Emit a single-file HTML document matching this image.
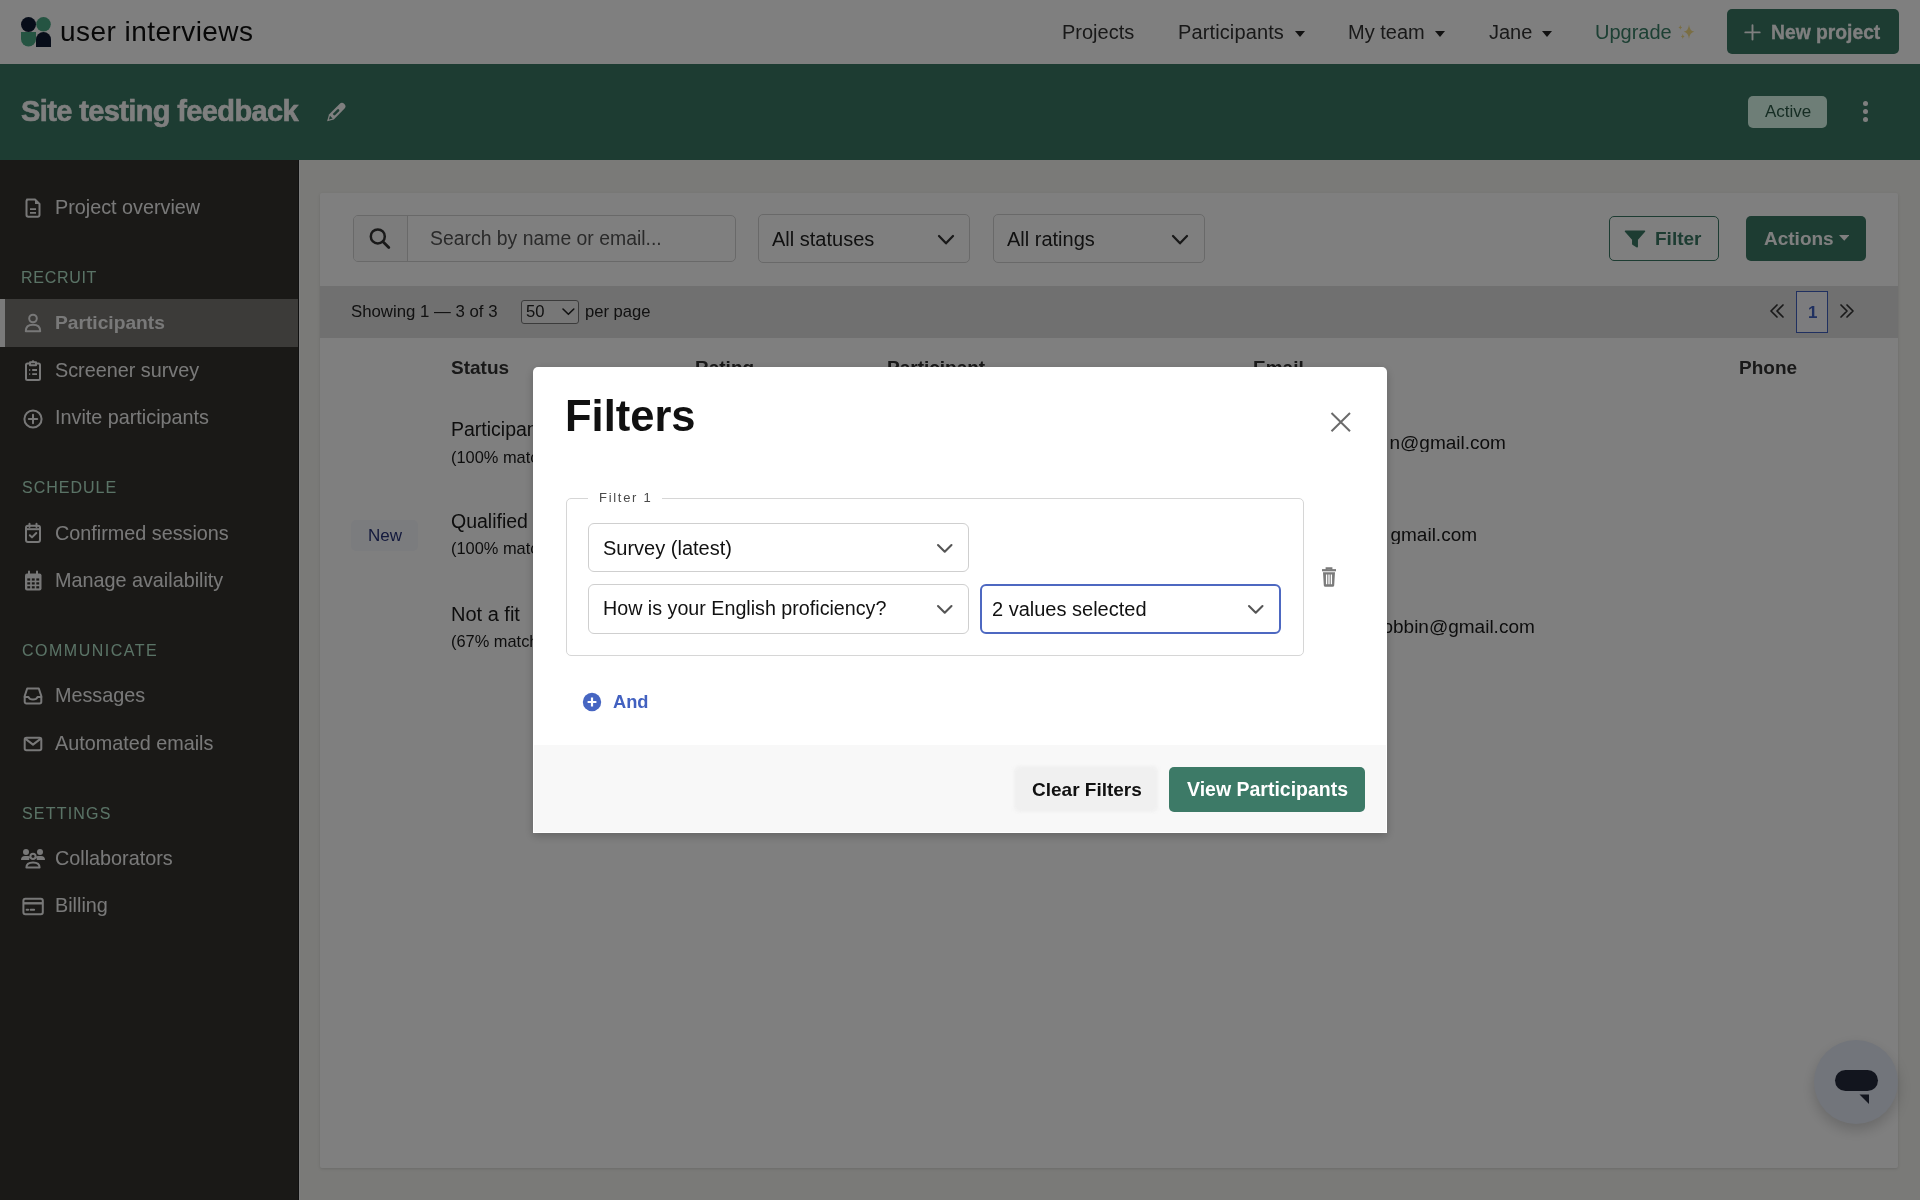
<!DOCTYPE html>
<html><head><meta charset="utf-8"><title>Filters</title>
<style>
html,body{margin:0;padding:0;width:1920px;height:1200px;overflow:hidden;background:#f4f4f0;font-family:"Liberation Sans", sans-serif;}
.t{position:absolute;white-space:nowrap;font-family:"Liberation Sans", sans-serif;will-change:transform;}
svg{display:block}
</style></head><body>
<div style="position:absolute;left:0px;top:0px;width:1920px;height:64px;background:#fff"></div>
<div style="position:absolute;left:0px;top:64px;width:1920px;height:96px;background:#3a7864"></div>
<div style="position:absolute;left:0px;top:160px;width:299px;height:1040px;background:#34322e"></div>
<div style="position:absolute;left:297.6px;top:160px;width:1.4px;height:1040px;background:#222"></div>
<div style="position:absolute;left:299px;top:160px;width:1.3px;height:1040px;background:#fff"></div>
<div style="position:absolute;left:300.3px;top:160px;width:1619.7px;height:1040px;background:#f4f4f0"></div>
<svg style="position:absolute;left:21px;top:17px;" width="30" height="30" viewBox="0 0 30 30"><circle cx="7.5" cy="7.5" r="7.5" fill="#0f1a33"/><circle cx="22.5" cy="7.3" r="7.3" fill="#4aa884"/><path d="M0 15 H15 V22 A7.5 7.5 0 0 1 0 22 Z" fill="#4aa884"/><path d="M15 22.5 A7.5 7.5 0 0 1 30 22.5 V30 H15 Z" fill="#0f1a33"/></svg>
<div class="t" style="left:60px;top:18.40px;font-size:28px;line-height:28px;font-weight:400;color:#111;letter-spacing:0.45px;">user interviews</div>
<div class="t" style="left:1062px;top:21.50px;font-size:20px;line-height:20px;font-weight:400;color:#333;">Projects</div>
<div class="t" style="left:1178px;top:21.50px;font-size:20px;line-height:20px;font-weight:400;color:#333;letter-spacing:0.12px;">Participants</div>
<div class="t" style="left:1348.3px;top:21.50px;font-size:20px;line-height:20px;font-weight:400;color:#333;">My team</div>
<div class="t" style="left:1489.3px;top:21.50px;font-size:20px;line-height:20px;font-weight:400;color:#333;">Jane</div>
<div class="t" style="left:1594.5px;top:21.50px;font-size:20px;line-height:20px;font-weight:400;color:#3a8068;">Upgrade</div>
<svg style="position:absolute;left:1295px;top:31px;" width="10" height="6" viewBox="0 0 10 6"><path d="M0 0 H10 L5.0 6 Z" fill="#222"/></svg>
<svg style="position:absolute;left:1434.5px;top:31px;" width="10" height="6" viewBox="0 0 10 6"><path d="M0 0 H10 L5.0 6 Z" fill="#222"/></svg>
<svg style="position:absolute;left:1541.5px;top:31px;" width="10" height="6" viewBox="0 0 10 6"><path d="M0 0 H10 L5.0 6 Z" fill="#222"/></svg>
<svg style="position:absolute;left:1670px;top:20px;" width="30" height="24" viewBox="1670 20 30 24"><path d="M1689 24.5 Q1689.54 30.98 1694.4 31.7 Q1689.54 32.42 1689 38.9 Q1688.46 32.42 1683.6 31.7 Q1688.46 30.98 1689 24.5 Z" fill="#f4dc88"/><path d="M1680.3 25 Q1680.49 27.16 1682.2 27.4 Q1680.49 27.64 1680.3 29.8 Q1680.11 27.64 1678.4 27.4 Q1680.11 27.16 1680.3 25 Z" fill="#f4dc88"/><path d="M1682.8 33.7 Q1682.99 36.13 1684.7 36.4 Q1682.99 36.67 1682.8 39.1 Q1682.61 36.67 1680.9 36.4 Q1682.61 36.13 1682.8 33.7 Z" fill="#f4dc88"/></svg>
<div style="position:absolute;left:1727px;top:9px;width:172px;height:45px;background:#3a7864;border-radius:5px"></div>
<svg style="position:absolute;left:1744px;top:24px;" width="17" height="17" viewBox="0 0 17 17"><path d="M8.5 1.2 V15.6 M1.3 8.4 H15.7" stroke="#fff" stroke-width="1.9" stroke-linecap="round"/></svg>
<div class="t" style="left:1771px;top:22.59px;font-size:19.3px;line-height:19.3px;font-weight:700;color:#fff;-webkit-text-stroke:0.3px #fff;">New project</div>
<div class="t" style="left:21.3px;top:96.75px;font-size:29px;line-height:29px;font-weight:700;color:#fff;letter-spacing:-0.62px;-webkit-text-stroke:0.6px #fff;">Site testing feedback</div>
<svg style="position:absolute;left:318px;top:95px;" width="36" height="33" viewBox="0 0 36 33"><g transform="translate(9.1 26.3) rotate(-45)"><path d="M0 0 L6.1 -3.4 H21 A3.4 3.4 0 0 1 21 3.4 H6.1 Z" fill="#fff"/><rect x="9" y="-1.25" width="7.8" height="2.5" rx="1.25" fill="#3a7864"/><path d="M2.6 0 L6 -1.9 V1.9 Z" fill="#3a7864"/></g></svg>
<div style="position:absolute;left:1748px;top:96px;width:79px;height:32px;background:#dcfdee;border-radius:5px"></div>
<div class="t" style="left:1765px;top:102.55px;font-size:17px;line-height:17px;font-weight:400;color:#2c5a48;">Active</div>
<div style="position:absolute;left:1862.9px;top:101.3px;width:5px;height:5px;background:#fff;border-radius:50%"></div>
<div style="position:absolute;left:1862.9px;top:109.3px;width:5px;height:5px;background:#fff;border-radius:50%"></div>
<div style="position:absolute;left:1862.9px;top:117.2px;width:5px;height:5px;background:#fff;border-radius:50%"></div>
<div style="position:absolute;left:0px;top:299px;width:297.6px;height:48px;background:#787672"></div>
<div style="position:absolute;left:0px;top:299px;width:5px;height:48px;background:#f4f4f4"></div>
<div class="t" style="left:55px;top:197.87px;font-size:19.8px;line-height:19.8px;font-weight:400;color:#f2f2f2;">Project overview</div>
<div class="t" style="left:21px;top:269.70px;font-size:16px;line-height:16px;font-weight:400;color:#b4e6cc;letter-spacing:0.7px;">RECRUIT</div>
<div class="t" style="left:55px;top:313.08px;font-size:19.2px;line-height:19.2px;font-weight:700;color:#f2f2f2;">Participants</div>
<div class="t" style="left:55px;top:360.67px;font-size:19.8px;line-height:19.8px;font-weight:400;color:#f2f2f2;">Screener survey</div>
<div class="t" style="left:55px;top:408.17px;font-size:19.8px;line-height:19.8px;font-weight:400;color:#f2f2f2;">Invite participants</div>
<div class="t" style="left:21.7px;top:480.40px;font-size:16px;line-height:16px;font-weight:400;color:#b4e6cc;letter-spacing:1.0px;">SCHEDULE</div>
<div class="t" style="left:55px;top:523.67px;font-size:19.8px;line-height:19.8px;font-weight:400;color:#f2f2f2;">Confirmed sessions</div>
<div class="t" style="left:55px;top:571.47px;font-size:19.8px;line-height:19.8px;font-weight:400;color:#f2f2f2;">Manage availability</div>
<div class="t" style="left:21.5px;top:643.10px;font-size:16px;line-height:16px;font-weight:400;color:#b4e6cc;letter-spacing:1.5px;">COMMUNICATE</div>
<div class="t" style="left:55px;top:686.17px;font-size:19.8px;line-height:19.8px;font-weight:400;color:#f2f2f2;">Messages</div>
<div class="t" style="left:55px;top:734.17px;font-size:19.8px;line-height:19.8px;font-weight:400;color:#f2f2f2;">Automated emails</div>
<div class="t" style="left:21.5px;top:805.90px;font-size:16px;line-height:16px;font-weight:400;color:#b4e6cc;letter-spacing:1.2px;">SETTINGS</div>
<div class="t" style="left:55px;top:848.87px;font-size:19.8px;line-height:19.8px;font-weight:400;color:#f2f2f2;">Collaborators</div>
<div class="t" style="left:55px;top:896.17px;font-size:19.8px;line-height:19.8px;font-weight:400;color:#f2f2f2;">Billing</div>
<svg style="position:absolute;left:24px;top:197px;" width="18" height="22" viewBox="0 0 18 22"><path d="M3 2.5 H11 L15.5 7 V18 A1.8 1.8 0 0 1 13.7 19.8 H4.3 A1.8 1.8 0 0 1 2.5 18 V4.3 A1.8 1.8 0 0 1 4.3 2.5 Z" fill="none" stroke="#f0f0f0" stroke-width="2" stroke-linejoin="round" stroke-linecap="round"/><path d="M11 2.5 V7 H15.5 Z" fill="#f0f0f0"/><path d="M6 12.2 H12 M6 15.8 H12" stroke="#f0f0f0" stroke-width="1.8"/></svg>
<svg style="position:absolute;left:23px;top:312px;" width="20" height="22" viewBox="0 0 20 22"><circle cx="10" cy="6.5" r="3.8" fill="none" stroke="#f0f0f0" stroke-width="2" stroke-linejoin="round" stroke-linecap="round"/><path d="M2.8 19.2 Q2.8 12.8 10 12.8 Q17.2 12.8 17.2 19.2 Z" fill="none" stroke="#f0f0f0" stroke-width="2" stroke-linejoin="round" stroke-linecap="round"/></svg>
<svg style="position:absolute;left:23px;top:359px;" width="20" height="23" viewBox="0 0 20 23"><path d="M6 4.5 H4.5 A1.5 1.5 0 0 0 3 6 V19.5 A1.5 1.5 0 0 0 4.5 21 H15.5 A1.5 1.5 0 0 0 17 19.5 V6 A1.5 1.5 0 0 0 15.5 4.5 H14" fill="none" stroke="#f0f0f0" stroke-width="2" stroke-linejoin="round" stroke-linecap="round"/><path d="M7 3.3 H13 V6.2 H7 Z" fill="none" stroke="#f0f0f0" stroke-width="2" stroke-linejoin="round" stroke-linecap="round"/><circle cx="10" cy="2.6" r="1.3" fill="#f0f0f0"/><path d="M6.2 11 H7.2 M9.2 11 H14 M6.2 15.2 H7.2 M9.2 15.2 H14" stroke="#f0f0f0" stroke-width="1.8"/></svg>
<svg style="position:absolute;left:22px;top:407.5px;" width="22" height="22" viewBox="0 0 22 22"><circle cx="11" cy="11" r="8.6" fill="none" stroke="#f0f0f0" stroke-width="2" stroke-linejoin="round" stroke-linecap="round"/><path d="M11 6.8 V15.2 M6.8 11 H15.2" fill="none" stroke="#f0f0f0" stroke-width="2" stroke-linejoin="round" stroke-linecap="round"/></svg>
<svg style="position:absolute;left:23px;top:522px;" width="20" height="22" viewBox="0 0 20 22"><path d="M6.5 1.8 V5 M13.5 1.8 V5" fill="none" stroke="#f0f0f0" stroke-width="2" stroke-linejoin="round" stroke-linecap="round"/><rect x="3" y="3.8" width="14" height="16.2" rx="2" fill="none" stroke="#f0f0f0" stroke-width="2" stroke-linejoin="round" stroke-linecap="round"/><path d="M3 7.2 H17" stroke="#f0f0f0" stroke-width="2"/><path d="M6.8 13.2 L9 15.4 L13.3 11" fill="none" stroke="#f0f0f0" stroke-width="2" stroke-linejoin="round" stroke-linecap="round"/></svg>
<svg style="position:absolute;left:23px;top:570px;" width="20" height="22" viewBox="0 0 20 22"><path d="M6 1.6 V4.6 M14 1.6 V4.6" fill="none" stroke="#f0f0f0" stroke-width="2" stroke-linejoin="round" stroke-linecap="round"/><rect x="2" y="3.4" width="16.5" height="17.2" rx="2" fill="#f0f0f0"/><g fill="#34322e"><rect x="4.3" y="8.4" width="2.9" height="2.2"/><rect x="8.8" y="8.4" width="2.9" height="2.2"/><rect x="13.3" y="8.4" width="2.9" height="2.2"/><rect x="4.3" y="12.3" width="2.9" height="2.2"/><rect x="8.8" y="12.3" width="2.9" height="2.2"/><rect x="13.3" y="12.3" width="2.9" height="2.2"/><rect x="4.3" y="16.2" width="2.9" height="2.2"/><rect x="8.8" y="16.2" width="2.9" height="2.2"/><rect x="13.3" y="16.2" width="2.9" height="2.2"/></g></svg>
<svg style="position:absolute;left:22px;top:686px;" width="22" height="20" viewBox="0 0 22 20"><path d="M5.2 2.5 H16.8 L19.3 10 V15.8 A1.7 1.7 0 0 1 17.6 17.5 H4.4 A1.7 1.7 0 0 1 2.7 15.8 V10 Z" fill="none" stroke="#f0f0f0" stroke-width="2" stroke-linejoin="round" stroke-linecap="round"/><path d="M2.7 11 H6.5 Q7.5 13.6 11 13.6 Q14.5 13.6 15.5 11 H19.3" fill="none" stroke="#f0f0f0" stroke-width="2" stroke-linejoin="round" stroke-linecap="round"/></svg>
<svg style="position:absolute;left:22px;top:735px;" width="22" height="18" viewBox="0 0 22 18"><rect x="2.7" y="2.7" width="16.6" height="12.6" rx="1.8" fill="none" stroke="#f0f0f0" stroke-width="2" stroke-linejoin="round" stroke-linecap="round"/><path d="M3.2 3.6 L11 9.6 L18.8 3.6" fill="none" stroke="#f0f0f0" stroke-width="2" stroke-linejoin="round" stroke-linecap="round"/></svg>
<svg style="position:absolute;left:20px;top:847px;" width="26" height="23" viewBox="0 0 26 23"><circle cx="6" cy="5" r="3" fill="#f0f0f0"/><circle cx="20" cy="5" r="3" fill="#f0f0f0"/><path d="M1 13 Q1 9 5 9 H8 Q9.5 9 10.3 10 Q9 11.5 9.2 13 Z" fill="#f0f0f0"/><path d="M25 13 Q25 9 21 9 H18 Q16.5 9 15.7 10 Q17 11.5 16.8 13 Z" fill="#f0f0f0"/><circle cx="13" cy="9.3" r="2.6" fill="none" stroke="#f0f0f0" stroke-width="2" stroke-linejoin="round" stroke-linecap="round"/><path d="M6.4 20.6 Q6.4 15.4 13 15.4 Q19.6 15.4 19.6 20.6 Z" fill="none" stroke="#f0f0f0" stroke-width="2" stroke-linejoin="round" stroke-linecap="round"/></svg>
<svg style="position:absolute;left:21px;top:896px;" width="24" height="21" viewBox="0 0 24 21"><rect x="2.4" y="2.8" width="19.4" height="15.4" rx="2" fill="none" stroke="#f0f0f0" stroke-width="2" stroke-linejoin="round" stroke-linecap="round"/><path d="M2.4 7.3 H21.8" stroke="#f0f0f0" stroke-width="2.4"/><path d="M5.6 13.7 H7.2 M9.6 13.7 H13.2" stroke="#f0f0f0" stroke-width="1.9" stroke-linecap="round"/></svg>
<div style="position:absolute;left:320px;top:193px;width:1578px;height:975px;background:#fff;box-shadow:0 1px 3px rgba(0,0,0,0.12);border-radius:2px"></div>
<div style="position:absolute;left:352.5px;top:215px;width:383px;height:47px;box-sizing:border-box;border:1px solid #d2d2d2;border-radius:5px;background:#fff"></div>
<div style="position:absolute;left:353.5px;top:216px;width:53.5px;height:45px;background:#f8f8f8;border-radius:4px 0 0 4px"></div>
<div style="position:absolute;left:407px;top:216px;width:1px;height:45px;background:#d2d2d2"></div>
<svg style="position:absolute;left:367px;top:226px;" width="26" height="26" viewBox="0 0 26 26"><circle cx="10.8" cy="10.4" r="7" fill="none" stroke="#333" stroke-width="2.5"/><path d="M16 15.7 L21.8 21.5" stroke="#333" stroke-width="2.8" stroke-linecap="round"/></svg>
<div class="t" style="left:430px;top:228.71px;font-size:19.4px;line-height:19.4px;font-weight:400;color:#555;">Search by name or email...</div>
<div style="position:absolute;left:757.5px;top:213.75px;width:212.5px;height:49.25px;box-sizing:border-box;border:1px solid #d2d2d2;border-radius:5px;background:#fff"></div>
<div class="t" style="left:771.7px;top:228.75px;font-size:20px;line-height:20px;font-weight:400;color:#222;">All statuses</div>
<svg style="position:absolute;left:936.5px;top:233.6px;" width="18" height="11.8" viewBox="0 0 18 11.8"><path d="M2 2 L9.0 9.3 L16 2" fill="none" stroke="#333" stroke-width="2.3" stroke-linecap="round" stroke-linejoin="round"/></svg>
<div style="position:absolute;left:992.5px;top:213.75px;width:212px;height:49.25px;box-sizing:border-box;border:1px solid #d2d2d2;border-radius:5px;background:#fff"></div>
<div class="t" style="left:1006.7px;top:228.75px;font-size:20px;line-height:20px;font-weight:400;color:#222;">All ratings</div>
<svg style="position:absolute;left:1171.0px;top:233.6px;" width="18" height="11.8" viewBox="0 0 18 11.8"><path d="M2 2 L9.0 9.3 L16 2" fill="none" stroke="#333" stroke-width="2.3" stroke-linecap="round" stroke-linejoin="round"/></svg>
<div style="position:absolute;left:1609px;top:216px;width:110px;height:45px;box-sizing:border-box;border:1.6px solid #3a7864;border-radius:5px;background:#fff"></div>
<svg style="position:absolute;left:1624px;top:230px;" width="22" height="18" viewBox="0 0 22 18"><path d="M1.5 1.2 H20.5 L13.2 9.5 V16.8 L8.8 14 V9.5 Z" fill="#3a7864" stroke="#3a7864" stroke-width="1.5" stroke-linejoin="round"/></svg>
<div class="t" style="left:1655px;top:229.25px;font-size:19px;line-height:19px;font-weight:700;color:#3a7864;">Filter</div>
<div style="position:absolute;left:1746px;top:216px;width:120px;height:45px;background:#3a7864;border-radius:5px"></div>
<div class="t" style="left:1764px;top:229.25px;font-size:19px;line-height:19px;font-weight:700;color:#fff;">Actions</div>
<svg style="position:absolute;left:1838.5px;top:235px;" width="10.5" height="5.8" viewBox="0 0 10.5 5.8"><path d="M0 0 H10.5 L5.25 5.8 Z" fill="#fff"/></svg>
<div style="position:absolute;left:320px;top:285.5px;width:1578px;height:52.5px;background:#e0e0e0"></div>
<div class="t" style="left:351.2px;top:303.52px;font-size:16.8px;line-height:16.8px;font-weight:400;color:#222;">Showing 1 — 3 of 3</div>
<div style="position:absolute;left:520.5px;top:300.3px;width:58.2px;height:23.9px;box-sizing:border-box;border:1px solid #777;border-radius:3px;background:#efefef"></div>
<div class="t" style="left:526.2px;top:303.69px;font-size:16.6px;line-height:16.6px;font-weight:400;color:#222;">50</div>
<svg style="position:absolute;left:560.5px;top:307px;" width="14.8" height="9.8" viewBox="0 0 14.8 9.8"><path d="M2 2 L7.4 7.3 L12.8 2" fill="none" stroke="#222" stroke-width="1.6" stroke-linecap="round" stroke-linejoin="round"/></svg>
<div class="t" style="left:585px;top:303.69px;font-size:16.6px;line-height:16.6px;font-weight:400;color:#222;">per page</div>
<svg style="position:absolute;left:1768px;top:302px;" width="18" height="18" viewBox="0 0 18 18"><path d="M9 3 L3 9 L9 15 M15 3 L9 9 L15 15" fill="none" stroke="#333" stroke-width="1.7" stroke-linecap="round" stroke-linejoin="round"/></svg>
<svg style="position:absolute;left:1838px;top:302px;" width="18" height="18" viewBox="0 0 18 18"><path d="M3 3 L9 9 L3 15 M9 3 L15 9 L9 15" fill="none" stroke="#333" stroke-width="1.7" stroke-linecap="round" stroke-linejoin="round"/></svg>
<div style="position:absolute;left:1796px;top:291px;width:32px;height:42px;box-sizing:border-box;border:1.5px solid #4060c0;background:#f8f9fc"></div>
<div class="t" style="left:1807.5px;top:303.55px;font-size:17px;line-height:17px;font-weight:700;color:#4060c0;">1</div>
<div class="t" style="left:450.7px;top:358.05px;font-size:19px;line-height:19px;font-weight:700;color:#333;">Status</div>
<div class="t" style="left:695px;top:358.05px;font-size:19px;line-height:19px;font-weight:700;color:#333;">Rating</div>
<div class="t" style="left:887px;top:358.05px;font-size:19px;line-height:19px;font-weight:700;color:#333;">Participant</div>
<div class="t" style="left:1253px;top:358.05px;font-size:19px;line-height:19px;font-weight:700;color:#333;">Email</div>
<div class="t" style="left:1739.3px;top:358.05px;font-size:19px;line-height:19px;font-weight:700;color:#333;">Phone</div>
<div class="t" style="left:450.7px;top:419.93px;font-size:19.5px;line-height:19.5px;font-weight:400;color:#1a1a1a;">Participant</div>
<div class="t" style="left:450.7px;top:448.66px;font-size:16.4px;line-height:16.4px;font-weight:400;color:#1a1a1a;">(100% match)</div>
<div class="t" style="left:450.7px;top:511.93px;font-size:19.5px;line-height:19.5px;font-weight:400;color:#1a1a1a;">Qualified</div>
<div class="t" style="left:450.7px;top:539.56px;font-size:16.4px;line-height:16.4px;font-weight:400;color:#1a1a1a;">(100% match)</div>
<div class="t" style="left:450.7px;top:603.50px;font-size:20px;line-height:20px;font-weight:400;color:#1a1a1a;">Not a fit</div>
<div class="t" style="left:450.7px;top:632.66px;font-size:16.4px;line-height:16.4px;font-weight:400;color:#1a1a1a;">(67% match)</div>
<div style="position:absolute;left:351.3px;top:520.3px;width:67px;height:30.9px;background:#f6f8fd;border-radius:5px"></div>
<div class="t" style="left:367.8px;top:527.35px;font-size:17px;line-height:17px;font-weight:400;color:#28347a;">New</div>
<div class="t" style="right:414.5px;top:433.45px;font-size:19px;line-height:19px;font-weight:400;color:#1a1a1a;clip-path:inset(0 0 0 calc(100% - 115.8px));">jane.robinson@gmail.com</div>
<div class="t" style="right:443.2px;top:525.45px;font-size:19px;line-height:19px;font-weight:400;color:#1a1a1a;clip-path:inset(0 0 0 calc(100% - 87.3px));">mark.tan1988@gmail.com</div>
<div class="t" style="right:385.6px;top:617.05px;font-size:19px;line-height:19px;font-weight:400;color:#1a1a1a;">lisa.mcrobbin@gmail.com</div>
<div style="position:absolute;left:1814px;top:1040px;width:84px;height:84px;background:#e4eaf6;border-radius:50%;box-shadow:0 6px 14px rgba(0,0,0,0.18)"></div>
<div style="position:absolute;left:1835px;top:1070px;width:42.5px;height:21px;background:#242a3c;border-radius:11px"></div>
<svg style="position:absolute;left:1859px;top:1094px;" width="11" height="11" viewBox="0 0 11 11"><path d="M0.5 0.5 H10 V10 Z" fill="#242a3c"/></svg>
<div style="position:absolute;left:0px;top:0px;width:1920px;height:1200px;background:rgba(0,0,0,0.5)"></div>
<div style="position:absolute;left:533px;top:366.5px;width:854px;height:466.5px;background:#fff;border-radius:5px 5px 0 0;box-shadow:0 3px 10px rgba(0,0,0,0.22)"></div>
<div style="position:absolute;left:534px;top:745px;width:852px;height:87px;background:#f8f8f8"></div>
<div class="t" style="left:565px;top:395.02px;font-size:43.5px;line-height:43.5px;font-weight:700;color:#111;">Filters</div>
<svg style="position:absolute;left:1329px;top:411px;" width="23" height="22" viewBox="0 0 23 22"><path d="M2.5 2 L21 20.3 M21 2 L2.5 20.3" stroke="#6b6b6b" stroke-width="2"/></svg>
<div style="position:absolute;left:566px;top:498px;width:737.5px;height:158.4px;box-sizing:border-box;border:1.3px solid #d6d6d6;border-radius:5px"></div>
<div style="position:absolute;left:587.6px;top:495px;width:74px;height:6px;background:#fff"></div>
<div class="t" style="left:599px;top:490.55px;font-size:13px;line-height:13px;font-weight:400;color:#4a4a4a;letter-spacing:1.7px;">Filter 1</div>
<div style="position:absolute;left:588.4px;top:523px;width:380.6px;height:49.4px;box-sizing:border-box;border:1.3px solid #cfcfcf;border-radius:6px;background:#fff"></div>
<div class="t" style="left:602.8px;top:538.00px;font-size:20px;line-height:20px;font-weight:400;color:#111;">Survey (latest)</div>
<svg style="position:absolute;left:935.5px;top:543px;" width="17.5" height="11.2" viewBox="0 0 17.5 11.2"><path d="M2 2 L8.75 8.7 L15.5 2" fill="none" stroke="#555" stroke-width="2.1" stroke-linecap="round" stroke-linejoin="round"/></svg>
<div style="position:absolute;left:588.4px;top:584.4px;width:380.6px;height:49.6px;box-sizing:border-box;border:1.3px solid #cfcfcf;border-radius:6px;background:#fff"></div>
<div class="t" style="left:602.8px;top:599.46px;font-size:19.7px;line-height:19.7px;font-weight:400;color:#111;">How is your English proficiency?</div>
<svg style="position:absolute;left:935.5px;top:604px;" width="17.5" height="11.2" viewBox="0 0 17.5 11.2"><path d="M2 2 L8.75 8.7 L15.5 2" fill="none" stroke="#555" stroke-width="2.1" stroke-linecap="round" stroke-linejoin="round"/></svg>
<div style="position:absolute;left:980px;top:584px;width:301.3px;height:50.1px;box-sizing:border-box;border:2px solid #4d68c1;border-radius:6px;background:#fff"></div>
<div class="t" style="left:992px;top:599.00px;font-size:20px;line-height:20px;font-weight:400;color:#111;">2 values selected</div>
<svg style="position:absolute;left:1247px;top:604px;" width="17.5" height="11.2" viewBox="0 0 17.5 11.2"><path d="M2 2 L8.75 8.7 L15.5 2" fill="none" stroke="#555" stroke-width="2.1" stroke-linecap="round" stroke-linejoin="round"/></svg>
<svg style="position:absolute;left:1319px;top:566px;" width="20" height="22" viewBox="0 0 20 22"><path d="M3 4.2 H17" stroke="#7a7a7a" stroke-width="2.2"/><path d="M7.5 4 V2.2 H12.5 V4" fill="none" stroke="#7a7a7a" stroke-width="1.8"/><path d="M4 6.2 H16 L15.2 19.5 A1.5 1.5 0 0 1 13.7 20.8 H6.3 A1.5 1.5 0 0 1 4.8 19.5 Z" fill="#7a7a7a"/><path d="M7.6 8.6 V18.2 M10 8.6 V18.2 M12.4 8.6 V18.2" stroke="#fff" stroke-width="1.3"/></svg>
<svg style="position:absolute;left:582px;top:691.5px;" width="20" height="20" viewBox="0 0 20 20"><circle cx="10" cy="10" r="9.2" fill="#4766c2"/><path d="M10 5.6 V14.4 M5.6 10 H14.4" stroke="#fff" stroke-width="2.2"/></svg>
<div class="t" style="left:613px;top:692.65px;font-size:18.3px;line-height:18.3px;font-weight:700;color:#4261c0;">And</div>
<div style="position:absolute;left:1014px;top:766px;width:144px;height:46px;background:#f0f0f0;border-radius:5px;filter:blur(1.5px)"></div>
<div class="t" style="left:1031.7px;top:780.05px;font-size:19px;line-height:19px;font-weight:700;color:#111;">Clear Filters</div>
<div style="position:absolute;left:1169.2px;top:766.9px;width:195.9px;height:44.9px;background:#3d7a67;border-radius:5px"></div>
<div class="t" style="left:1187px;top:779.62px;font-size:19.5px;line-height:19.5px;font-weight:700;color:#fff;">View Participants</div>
</body></html>
